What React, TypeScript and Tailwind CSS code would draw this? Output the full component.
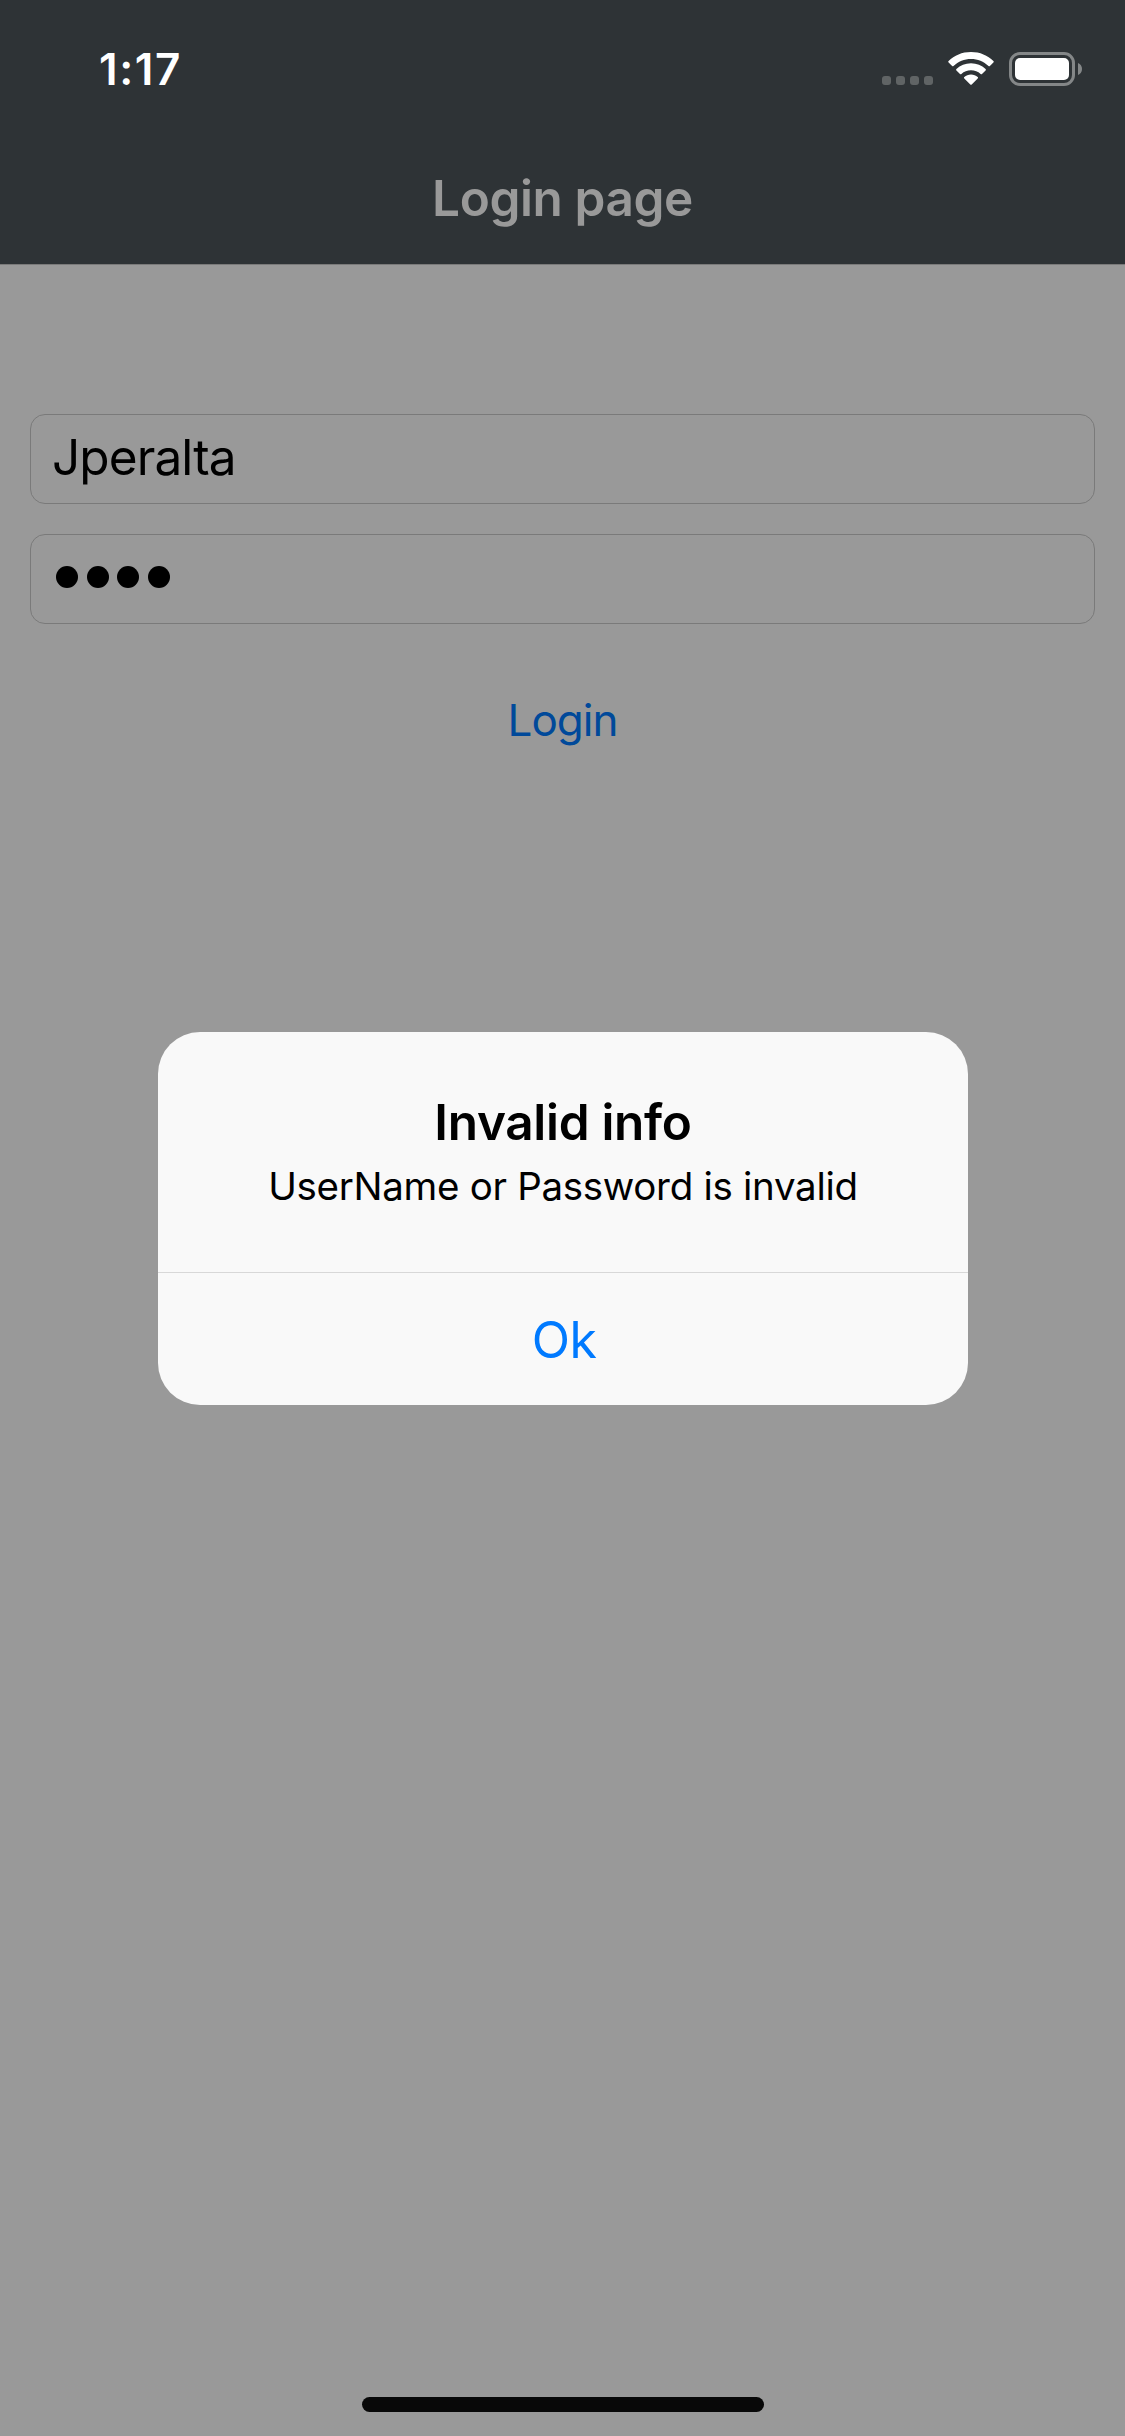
import React from "react";

function WifiIcon() {
  return (
    <svg width="46" height="33" viewBox="0 0 46 33" fill="#fff">
      <path d="M23 0C32 0 39.600 3.400 45.400 9Q46.100 9.700 45.400 10.400L41.900 13.900Q41.200 14.600 40.500 13.900C35.700 9.400 29.700 6.900 23 6.900S10.300 9.400 5.500 13.900Q4.800 14.600 4.100 13.900L0.600 10.400Q-0.100 9.700 0.600 9C6.400 3.400 14 0 23 0Z" />
      <path d="M23 11.300C28.700 11.300 33.700 13.400 37.600 17Q38.300 17.700 37.600 18.400L34 21.900Q33.300 22.600 32.600 21.900C30 19.500 26.700 18.200 23 18.200S16 19.500 13.400 21.900Q12.700 22.600 12 21.900L8.400 18.400Q7.700 17.700 8.400 17C12.300 13.400 17.300 11.300 23 11.300Z" />
      <path d="M23 22.600C25.600 22.600 27.900 23.500 29.700 25.100Q30.400 25.700 29.700 26.400L23.700 32.400Q23 33.100 22.300 32.400L16.300 26.400Q15.600 25.700 16.300 25.100C18.100 23.500 20.400 22.600 23 22.600Z" />
    </svg>
  );
}

function BatteryIcon() {
  return (
    <svg width="74" height="34" viewBox="0 0 74 34">
      <rect x="1.500" y="1.500" width="63" height="31" rx="9.500" fill="none" stroke="#848788" strokeWidth="3" />
      <rect x="6" y="6" width="54" height="22" rx="5" fill="#fff" />
      <path d="M69 11C71.500 12 73 14.300 73 17S71.500 22 69 23Z" fill="#848788" />
    </svg>
  );
}

function StatusBar() {
  return (
    <div className="flex h-[132px] items-start justify-between pr-[42px] pl-[99px] text-white">
      <time className="mt-[39px] text-[44px] leading-[60px] font-semibold tracking-[1.6px]">1:17</time>
      <div className="mt-[52px] flex items-start">
        <div className="mt-6 mr-[15px] flex gap-[5px]">
          {[0, 1, 2, 3].map((i) => (
            <span key={i} className="size-[9px] rounded-[3px] bg-[#606465]" />
          ))}
        </div>
        <WifiIcon />
        <div className="ml-[15px]">
          <BatteryIcon />
        </div>
      </div>
    </div>
  );
}

function Alert() {
  return (
    <div className="absolute inset-0 flex items-start justify-center pt-[1032px]">
      <div
        role="alertdialog"
        className="ml-px flex h-[373px] w-[810px] flex-col rounded-[42px] bg-[#f9f9f9] text-center text-black"
      >
        <div className="flex h-[241px] flex-col items-center border-b border-[#d8d8d8] pt-[60px]">
          <h2 className="text-[49.5px] leading-[60px] font-semibold tracking-[-0.3px]">Invalid info</h2>
          <p className="mt-[9px] text-[38.5px] leading-[50px] tracking-[-0.3px]">UserName or Password is invalid</p>
        </div>
        <button className="flex-1 pt-px pl-0.5 text-[50px] leading-[60px] tracking-[-0.5px] text-[#007aff]">Ok</button>
      </div>
    </div>
  );
}

export default function App() {
  return (
    <div className="relative flex h-[2436px] w-[1125px] flex-col bg-[#999999] font-['Inter',sans-serif]">
      <header className="h-[265px] border-b border-[#7a7a7a] bg-[#2e3336]">
        <StatusBar />
        <h1 className="mt-9 text-center text-[49.5px] leading-[60px] font-semibold tracking-[-0.4px] text-[#999999]">
          Login page
        </h1>
      </header>
      <main className="flex flex-1 flex-col gap-[30px] px-[30px] pt-[149px]">
        <div className="flex h-[90px] items-center rounded-[15px] border border-[#7a7a7a] pb-1 pl-[21px] text-[49.5px] leading-[60px] tracking-[-0.9px] text-black">
          Jperalta
        </div>
        <div className="flex h-[90px] items-center gap-[8.6px] rounded-[15px] border border-[#7a7a7a] pb-1 pl-[25px]">
          {[0, 1, 2, 3].map((i) => (
            <span key={i} className="size-[22px] rounded-full bg-black" />
          ))}
        </div>
        <button className="mt-[36px] self-center text-[44px] leading-[60px] tracking-[-1px] text-[#00499a]">
          Login
        </button>
      </main>
      <Alert />
      <div className="mb-6 h-[15px] w-[402px] self-center rounded-full bg-[#080808]" />
    </div>
  );
}
